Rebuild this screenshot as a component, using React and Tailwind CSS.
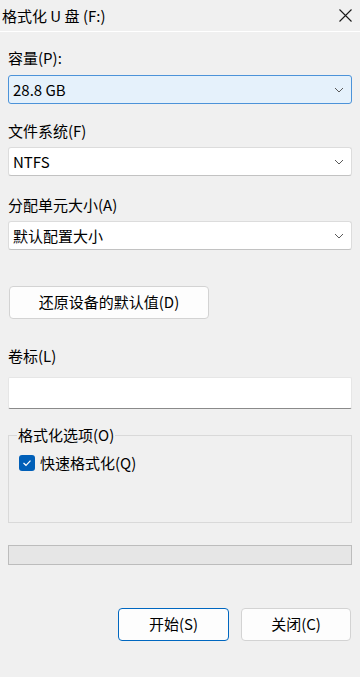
import React from "react";

const font = { fontFamily: '"Noto Sans CJK SC", "Noto Sans", sans-serif' };

function Chevron() {
  return (
    <svg width="10" height="6" viewBox="0 0 10 6" className="shrink-0">
      <path d="M1 1 L5 5 L9 1" fill="none" stroke="#5a5a5a" strokeWidth="1" />
    </svg>
  );
}

function Select({ value, active }) {
  return (
    <div
      className={
        "flex h-[29px] items-center justify-between rounded-[3px] border pl-[4px] pr-[7px] text-[15px] text-black " +
        (active
          ? "border-[#4c93d9] bg-[#e5f1fb]"
          : "border-[#dcdcdc] border-b-[#c2c2c2] bg-white")
      }
    >
      <span className="leading-none">{value}</span>
      <Chevron />
    </div>
  );
}

export default function App() {
  return (
    <div
      className="flex h-[677px] w-[360px] flex-col bg-[#f0f0f0] text-[15px] text-black"
      style={font}
    >
      <div className="flex h-[31px] items-center justify-between pl-[2px] pr-[8px]">
        <span className="text-[15px] leading-none">格式化 U 盘 (F:)</span>
        <svg width="13" height="13" viewBox="0 0 13 13">
          <path d="M0.5 0.5 L12.5 12.5 M12.5 0.5 L0.5 12.5" stroke="#1a1a1a" strokeWidth="1.1" />
        </svg>
      </div>
      <div className="h-px bg-white" />
      <div className="flex flex-col px-[8px]">
        <div className="mt-[16px] h-[20px] leading-[20px]">容量(P):</div>
        <div className="mt-[7px]">
          <Select value="28.8 GB" active />
        </div>
        <div className="mt-[17px] h-[20px] leading-[20px]">文件系统(F)</div>
        <div className="mt-[6px]">
          <Select value="NTFS" />
        </div>
        <div className="mt-[19px] h-[20px] leading-[20px]">分配单元大小(A)</div>
        <div className="mt-[6px]">
          <Select value="默认配置大小" />
        </div>
        <button className="ml-px mt-[36px] flex h-[33px] w-[200px] items-center justify-center rounded-[4px] border border-[#d3d3d3] bg-[#fdfdfd] text-[15px]">
          还原设备的默认值(D)
        </button>
        <div className="mt-[27px] h-[20px] leading-[20px]">卷标(L)</div>
        <div className="mt-[11px] h-[32px] rounded-[2px] border border-[#e6e6e6] border-b-[#8a8a8a] bg-white" />
        <div className="mt-[26px] flex h-[88px] flex-col border border-[#d9d9d9]">
          <span className="-mt-[11px] ml-[8px] self-start bg-[#f0f0f0] px-px leading-[20px]">
            格式化选项(O)
          </span>
          <div className="ml-[10px] mt-[8px] flex items-center gap-[5px]">
            <span className="flex h-[16px] w-[16px] items-center justify-center rounded-[3px] bg-[#005fb8]">
              <svg width="10" height="8" viewBox="0 0 10 8">
                <path d="M1.5 4 L4 6.3 L8.5 1.7" fill="none" stroke="white" strokeWidth="1.2" />
              </svg>
            </span>
            <span className="leading-[20px]">快速格式化(Q)</span>
          </div>
        </div>
        <div className="mt-[22px] h-[20px] border border-[#bcbcbc] bg-[#e6e6e6]" />
        <div className="mt-[43px] flex justify-end gap-[12px] pr-px">
          <button className="flex h-[33px] w-[111px] items-center justify-center rounded-[4px] border border-[#0067c0] bg-[#fdfdfd] text-[15px]">
            开始(S)
          </button>
          <button className="flex h-[33px] w-[110px] items-center justify-center rounded-[4px] border border-[#d3d3d3] bg-[#fdfdfd] text-[15px]">
            关闭(C)
          </button>
        </div>
      </div>
    </div>
  );
}
